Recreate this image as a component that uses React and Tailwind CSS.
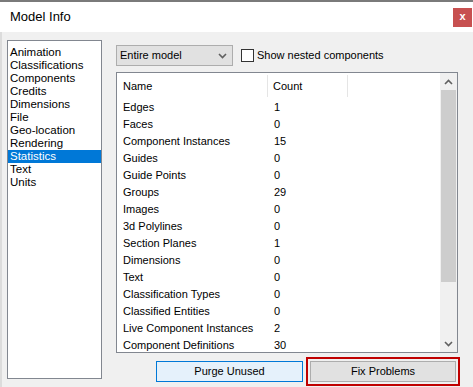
import React from "react";

const sections = [
  "Animation",
  "Classifications",
  "Components",
  "Credits",
  "Dimensions",
  "File",
  "Geo-location",
  "Rendering",
  "Statistics",
  "Text",
  "Units",
];

const stats = [
  ["Edges", "1"],
  ["Faces", "0"],
  ["Component Instances", "15"],
  ["Guides", "0"],
  ["Guide Points", "0"],
  ["Groups", "29"],
  ["Images", "0"],
  ["3d Polylines", "0"],
  ["Section Planes", "1"],
  ["Dimensions", "0"],
  ["Text", "0"],
  ["Classification Types", "0"],
  ["Classified Entities", "0"],
  ["Live Component Instances", "2"],
  ["Component Definitions", "30"],
];

function Chevron({ up, className }) {
  return (
    <svg width="9" height="6" viewBox="0 0 9 6" className={className}>
      <polyline
        points={up ? "1,5 4.5,1.5 8,5" : "1,1 4.5,4.5 8,1"}
        fill="none"
        stroke="currentColor"
        strokeWidth="1.6"
      />
    </svg>
  );
}

export default function App() {
  return (
    <div className="w-[473px] h-[387px] flex flex-col bg-[#f0f0f0] overflow-hidden font-['Liberation_Sans',Arial,sans-serif] text-[11px] text-black">
      {/* Title bar */}
      <div className="h-[32px] shrink-0 bg-white border-t-2 border-[#7a7a7a] flex items-center justify-between pl-[10px] pr-px">
        <span className="text-[13px] text-[#000]">Model Info</span>
        <div className="w-[19px] h-[19px] bg-[#c75050] flex items-center justify-center text-white font-bold text-[11px] leading-none pb-px">
          x
        </div>
      </div>

      {/* Body */}
      <div className="flex-1 flex border-l-2 border-[#dcdcdc] pl-[5px] pt-[8px]">
        {/* Section list */}
        <div className="w-[95px] h-[339px] bg-white border border-[#828790] pt-[5px] leading-[13px] text-[11.5px]">
          {sections.map((s) => (
            <div
              key={s}
              className={
                s === "Statistics"
                  ? "h-[13px] pl-[2px] bg-[#0078d7] text-white"
                  : "h-[13px] pl-[2px]"
              }
            >
              {s}
            </div>
          ))}
        </div>

        {/* Right panel */}
        <div className="ml-[14px] mt-[5px] flex flex-col">
          <div className="h-[21px] flex items-center">
            <div className="w-[117px] h-[21px] bg-[#e1e1e1] border border-[#adadad] flex items-center justify-between pl-[3px] pr-[5px]">
              <span>Entire model</span>
              <Chevron className="text-[#606060]" />
            </div>
            <div className="ml-[8px] w-[13px] h-[13px] bg-white border border-[#333]" />
            <span className="ml-[3px]">Show nested components</span>
          </div>

          {/* Stats table */}
          <div className="mt-[6px] w-[342px] h-[281px] bg-white border border-[#828790] flex overflow-hidden">
            <div className="flex-1 flex flex-col">
              <div className="h-[26px] shrink-0 flex items-stretch py-[2px]">
                <div className="w-[151px] border-r border-[#e5e5e5] pl-[6px] flex items-center">Name</div>
                <div className="w-[80px] border-r border-[#e5e5e5] pl-[5px] flex items-center">Count</div>
              </div>
              {stats.map(([name, count]) => (
                <div key={name} className="h-[17px] shrink-0 flex items-center">
                  <div className="w-[151px] pl-[6px]">{name}</div>
                  <div className="pl-[6px]">{count}</div>
                </div>
              ))}
            </div>
            <div className="w-[17px] bg-[#f0f0f0] flex flex-col">
              <div className="h-[17px] flex items-center justify-center text-[#606060]">
                <Chevron up />
              </div>
              <div className="mx-px h-[192px] bg-[#cdcdcd]" />
              <div className="flex-1" />
              <div className="h-[17px] flex items-center justify-center text-[#606060]">
                <Chevron />
              </div>
            </div>
          </div>

          {/* Buttons */}
          <div className="mt-[4px] flex items-center">
            <div className="ml-[40px] w-[147px] h-[21px] bg-[#e5f1fb] border border-[#0078d7] flex items-center justify-center">
              Purge Unused
            </div>
            <div className="ml-[3px] w-[154px] h-[29px] border-2 border-[#c00000] p-[2px]">
              <div className="h-full bg-[#e1e1e1] border border-[#adadad] flex items-center justify-center">
                Fix Problems
              </div>
            </div>
          </div>
        </div>
      </div>
    </div>
  );
}
